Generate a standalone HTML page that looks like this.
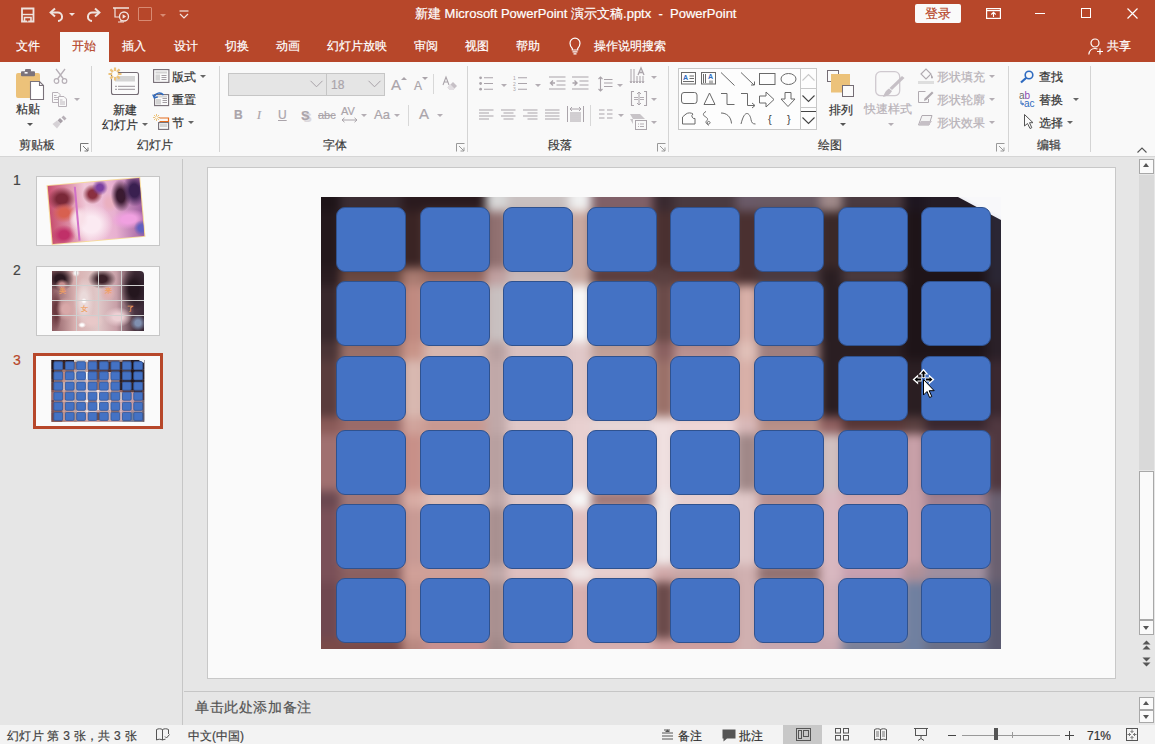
<!DOCTYPE html>
<html><head><meta charset="utf-8">
<style>
*{margin:0;padding:0;box-sizing:border-box}
html,body{-webkit-font-smoothing:antialiased;width:1155px;height:744px;overflow:hidden;background:#e6e6e6;font-family:"Liberation Sans",sans-serif;position:relative}
.a{position:absolute}
.t{position:absolute;white-space:nowrap;line-height:1;-webkit-text-stroke:0.2px currentColor}
svg{position:absolute;overflow:visible}
#title{left:0;top:0;width:1155px;height:62px;background:#b7472a}
#ribbon{left:0;top:62px;width:1155px;height:95px;background:#f9f9f9;border-bottom:1px solid #d6d6d6}
.tab{color:#fff;font-size:12px;top:40px}
.grp{color:#3c3c3c;font-size:12px;top:139px}
.sep{position:absolute;top:66px;width:1px;height:86px;background:#d4d4d4}
.rb{color:#333;font-size:12px}
.dis{color:#aaa4aa}
.dd{position:absolute;width:0;height:0;border-left:3px solid transparent;border-right:3px solid transparent;border-top:3px solid #6a6a6a}
.ddd{border-top-color:#b4aeb4}
.sq{position:absolute;width:70px;height:65px;background:#4472c4;border:1px solid #2f528f;border-radius:9px}
.sqt{border-width:6px;border-color:#34589a;border-radius:12px}
#status{left:0;top:725px;width:1155px;height:19px;background:#f3f3f3}
.st{font-size:12px;color:#444;top:730px}
</style></head><body>
<div id="title" class="a"></div>
<div id="ribbon" class="a"></div>
<!-- QAT -->
<svg style="left:20px;top:7px" width="16" height="16" viewBox="0 0 16 16"><path d="M2 1.5h11.5v13H2z" fill="none" stroke="#efe3de" stroke-width="1.8"/><path d="M2 7.5h11.5" stroke="#efe3de" stroke-width="1.4"/><path d="M4.5 14.5v-4h6.5v4" fill="none" stroke="#efe3de" stroke-width="1.6"/><path d="M7.7 12.5v2" stroke="#b7472a" stroke-width="1.2"/></svg>
<svg style="left:49px;top:7px" width="16" height="15" viewBox="0 0 16 15"><path d="M6 1.5L1.6 5.5 6 9.5" fill="none" stroke="#efe3de" stroke-width="2"/><path d="M2 5.5h6.5a4.3 4.3 0 0 1 0.5 8.6" fill="none" stroke="#efe3de" stroke-width="2"/></svg>
<div class="dd" style="left:69px;top:13px;border-top-color:#f2e4df;border-left-width:3px;border-right-width:3px;border-top-width:3px"></div>
<svg style="left:85px;top:7px" width="16" height="15" viewBox="0 0 16 15"><path d="M10 1.5l4.4 4L10 9.5" fill="none" stroke="#efe3de" stroke-width="2"/><path d="M14 5.5H7.5a4.3 4.3 0 0 0-0.5 8.6" fill="none" stroke="#efe3de" stroke-width="2"/></svg>
<svg style="left:113px;top:7px" width="17" height="16" viewBox="0 0 17 16"><path d="M0 1h16" stroke="#f2e4df" stroke-width="1.5"/><path d="M2 1v9h4" fill="none" stroke="#f2e4df" stroke-width="1.2"/><circle cx="11" cy="9.5" r="4.5" fill="none" stroke="#f2e4df" stroke-width="1.3"/><path d="M9.6 7.2v4.6l3.6-2.3z" fill="#f2e4df"/><path d="M5 15h6M8 13v2" stroke="#f2e4df" stroke-width="1.2"/></svg>
<div class="a" style="left:138px;top:7px;width:14px;height:14px;border:1px solid #d88a72;border-radius:1px"></div>
<div class="dd" style="left:160px;top:14px;border-top-color:#d88a72"></div>
<svg style="left:179px;top:10px" width="10" height="9" viewBox="0 0 10 9"><path d="M0.5 1h9" stroke="#f2e4df" stroke-width="1.2"/><path d="M1 4l4 4 4-4" fill="none" stroke="#f2e4df" stroke-width="1.2"/></svg>

<div class="t" style="left:415px;top:7px;font-size:13px;color:#fff">新建 Microsoft PowerPoint 演示文稿.pptx&nbsp; - &nbsp;PowerPoint</div>

<!-- login + window controls -->
<div class="a" style="left:915px;top:4px;width:46px;height:19px;background:#fafafa;border-radius:2px"></div>
<div class="t" style="left:925px;top:7px;font-size:13px;color:#b7472a">登录</div>
<svg style="left:986px;top:8px" width="15" height="11" viewBox="0 0 15 11"><rect x="0.6" y="0.6" width="13.8" height="9.8" fill="none" stroke="#fff" stroke-width="1.2"/><path d="M0.6 2.6h13.8" stroke="#fff" stroke-width="1.2"/><path d="M7.5 9V4.5M5.3 6.5l2.2-2.2 2.2 2.2" fill="none" stroke="#fff" stroke-width="1.1"/></svg>
<div class="a" style="left:1035px;top:13px;width:10px;height:1px;background:#fff"></div>
<div class="a" style="left:1081px;top:8px;width:10px;height:10px;border:1px solid #fff"></div>
<svg style="left:1127px;top:8px" width="11" height="11" viewBox="0 0 11 11"><path d="M0.5 0.5l10 10M10.5 0.5l-10 10" stroke="#fff" stroke-width="1.2"/></svg>

<!-- tabs -->
<div class="a" style="left:60px;top:32px;width:49px;height:31px;background:#f9f9f9"></div>
<div class="t tab" style="left:16px">文件</div>
<div class="t tab" style="left:72px;color:#b7472a">开始</div>
<div class="t tab" style="left:122px">插入</div>
<div class="t tab" style="left:174px">设计</div>
<div class="t tab" style="left:225px">切换</div>
<div class="t tab" style="left:276px">动画</div>
<div class="t tab" style="left:327px">幻灯片放映</div>
<div class="t tab" style="left:414px">审阅</div>
<div class="t tab" style="left:465px">视图</div>
<div class="t tab" style="left:516px">帮助</div>
<svg style="left:569px;top:37px" width="12" height="18" viewBox="0 0 12 18"><path d="M3.3 11.5C2.2 10.3 1 9 1 6.2A5 5 0 0 1 11 6.2c0 2.8-1.2 4.1-2.3 5.3V13H3.3z" fill="none" stroke="#fff" stroke-width="1.2"/><path d="M3.5 14.8h5M4.5 16.8h3" stroke="#fff" stroke-width="1.2"/></svg>
<div class="t tab" style="left:594px">操作说明搜索</div>
<svg style="left:1088px;top:38px" width="16" height="17" viewBox="0 0 16 17"><circle cx="7" cy="5" r="4" fill="none" stroke="#fff" stroke-width="1.2"/><path d="M0.8 16.5c0.5-3.8 2.8-6 6.2-6 1 0 1.8 0.2 2.5 0.5" fill="none" stroke="#fff" stroke-width="1.2"/><path d="M12 10.5v6M9 13.5h6" stroke="#fff" stroke-width="1.2"/></svg>
<div class="t tab" style="left:1107px">共享</div>

<!-- group labels -->
<div class="t grp" style="left:19px">剪贴板</div>
<div class="t grp" style="left:137px">幻灯片</div>
<div class="t grp" style="left:323px">字体</div>
<div class="t grp" style="left:548px">段落</div>
<div class="t grp" style="left:818px">绘图</div>
<div class="t grp" style="left:1037px">编辑</div>
<!-- launchers -->
<svg style="left:80px;top:143px" width="9" height="9" viewBox="0 0 9 9"><path d="M0.5 8.5V0.5h8M3 3l5 5M8 4.5V8H4.5" fill="none" stroke="#777" stroke-width="1"/></svg>
<svg style="left:456px;top:143px" width="9" height="9" viewBox="0 0 9 9"><path d="M0.5 8.5V0.5h8M3 3l5 5M8 4.5V8H4.5" fill="none" stroke="#999" stroke-width="1"/></svg>
<svg style="left:657px;top:143px" width="9" height="9" viewBox="0 0 9 9"><path d="M0.5 8.5V0.5h8M3 3l5 5M8 4.5V8H4.5" fill="none" stroke="#999" stroke-width="1"/></svg>
<svg style="left:996px;top:143px" width="9" height="9" viewBox="0 0 9 9"><path d="M0.5 8.5V0.5h8M3 3l5 5M8 4.5V8H4.5" fill="none" stroke="#999" stroke-width="1"/></svg>

<div class="sep" style="left:91px"></div>
<div class="sep" style="left:219px"></div>
<div class="sep" style="left:467px"></div>
<div class="sep" style="left:668px"></div>
<div class="sep" style="left:1008px"></div>
<div class="sep" style="left:1090px"></div>
<svg style="left:1137px;top:147px" width="10" height="6" viewBox="0 0 10 6"><path d="M0.5 5.5L5 1l4.5 4.5" fill="none" stroke="#555" stroke-width="1.1"/></svg>

<!-- clipboard -->
<svg style="left:15px;top:69px" width="30" height="32" viewBox="0 0 30 32"><rect x="1" y="4" width="24" height="25" rx="2" fill="#ecc27a"/><rect x="6" y="2.2" width="14" height="5" rx="1" fill="#7b737b"/><rect x="10" y="0" width="6" height="3" rx="1" fill="#7b737b"/><rect x="9.6" y="3" width="3" height="1.6" fill="#f9f9f9"/><path d="M15.5 12.5h9l4 4v14h-13z" fill="#fff" stroke="#7b737b" stroke-width="1.1"/><path d="M24.5 12.5v4h4" fill="none" stroke="#7b737b" stroke-width="1.1"/></svg>
<div class="t rb" style="left:16px;top:103px">粘贴</div>
<div class="dd" style="left:27px;top:123px;border-left-width:3px;border-right-width:3px;border-top-width:3px;border-top-color:#555"></div>
<svg style="left:53px;top:68px" width="15" height="16" viewBox="0 0 15 16"><path d="M3 1l7.5 10M12 1L4.5 11" stroke="#b7b0b7" stroke-width="1.3"/><circle cx="3.5" cy="13" r="2.3" fill="none" stroke="#b7b0b7" stroke-width="1.2"/><circle cx="11.5" cy="13" r="2.3" fill="none" stroke="#b7b0b7" stroke-width="1.2"/></svg>
<svg style="left:52px;top:92px" width="16" height="15" viewBox="0 0 16 15"><path d="M0.5 0.5h5.5l2 2V10.5H0.5z" fill="none" stroke="#b7b0b7" stroke-width="1"/><path d="M2 3.5h2.5M2 5.5h4M2 7.5h4" stroke="#b7b0b7" stroke-width="0.9"/><path d="M6.5 4.5h5.5l2.5 2.5v7.5H6.5z" fill="#f9f9f9" stroke="#b7b0b7" stroke-width="1"/><path d="M8 8h2.5M8 10h5M8 12h5" stroke="#b7b0b7" stroke-width="0.9"/></svg>
<div class="dd ddd" style="left:74px;top:98px"></div>
<svg style="left:52px;top:115px" width="16" height="14" viewBox="0 0 16 14"><path d="M11.5 0.5l3 3-2 2-3-3z" fill="#b7b0b7"/><path d="M8 3l3 3-2.5 2.5-3-3z" fill="#a8a0a8"/><path d="M5 5.5l3.5 3.5-3.5 4.5L0.5 9z" fill="#d6d2d6"/></svg>

<!-- slides -->
<svg style="left:108px;top:67px" width="32" height="29" viewBox="0 0 32 29"><rect x="3.5" y="5.5" width="27" height="22" rx="2" fill="#fbfbfb" stroke="#756d75" stroke-width="1.1"/><rect x="7" y="9" width="20" height="5.5" fill="#d4d4d4"/><path d="M7 19.3h2M10 19.3h17M7 22.3h2M10 22.3h17" stroke="#9a949a" stroke-width="1"/><g stroke="#ecc27a" stroke-width="2.2"><path d="M7 0.5v13M0.5 7h13M2.4 2.4l9.2 9.2M11.6 2.4l-9.2 9.2"/></g><circle cx="7" cy="7" r="2.9" fill="#fbfbfb"/></svg>
<div class="t rb" style="left:113px;top:104px">新建</div>
<div class="t rb" style="left:102px;top:119px">幻灯片</div>
<div class="dd" style="left:142px;top:123px;border-top-color:#666"></div>
<svg style="left:153px;top:69px" width="17" height="14" viewBox="0 0 17 14"><rect x="0.6" y="0.6" width="15.3" height="12.8" fill="none" stroke="#756d75" stroke-width="1.1"/><rect x="2.5" y="2.5" width="11.5" height="2" fill="#d4d4d4"/><rect x="2.5" y="5.5" width="4.5" height="6" fill="#d4d4d4"/><path d="M8.5 6.5h5M8.5 8.5h5M8.5 10.5h5" stroke="#9a949a" stroke-width="0.9"/></svg>
<div class="t rb" style="left:172px;top:71px">版式</div>
<div class="dd" style="left:200px;top:75px;border-top-color:#666"></div>
<svg style="left:152px;top:90px" width="18" height="17" viewBox="0 0 18 17"><rect x="2.6" y="4.6" width="14" height="11" fill="#fbfbfb" stroke="#756d75" stroke-width="1.1"/><rect x="4" y="9" width="5" height="5.5" fill="#d4d4d4"/><path d="M10.5 8.5h4.5M10.5 10.5h4.5M10.5 12.5h4.5" stroke="#9a949a" stroke-width="0.9"/><rect x="4" y="6" width="11" height="1.5" fill="#d4d4d4"/><path d="M2.5 6.5C3.5 3 8.5 1.5 11.5 5" fill="none" stroke="#2f6bc0" stroke-width="1.5"/><path d="M0.8 4.5l1.5 3.5 3.5-1.2" fill="none" stroke="#2f6bc0" stroke-width="1.4"/></svg>
<div class="t rb" style="left:172px;top:94px">重置</div>
<svg style="left:153px;top:114px" width="17" height="16" viewBox="0 0 17 16"><g stroke="#ecc27a" stroke-width="1"><path d="M3.5 0v7M0 3.5h7M1 1l5 5M6 1L1 6"/></g><circle cx="3.5" cy="3.5" r="1.3" fill="#fbfbfb"/><path d="M6.5 4h9v3.5H6.5" fill="none" stroke="#e46c1e" stroke-width="1.2"/><rect x="5.6" y="8.6" width="10" height="6.8" fill="none" stroke="#756d75" stroke-width="1.1"/><rect x="7" y="10" width="7.3" height="3" fill="#d4d4d4"/></svg>
<div class="t rb" style="left:172px;top:117px">节</div>
<div class="dd" style="left:188px;top:121px;border-top-color:#666"></div>

<!-- font -->
<div class="a" style="left:228px;top:73px;width:99px;height:23px;background:#e5e5e5;border:1px solid #c6c6c6"></div>
<div class="a" style="left:326px;top:73px;width:59px;height:23px;background:#e5e5e5;border:1px solid #c6c6c6"></div>
<svg style="left:310px;top:80px" width="13" height="8" viewBox="0 0 13 8"><path d="M0.5 0.8l6 6 6-6" fill="none" stroke="#a8a2a8" stroke-width="1"/></svg>
<svg style="left:368px;top:80px" width="13" height="8" viewBox="0 0 13 8"><path d="M0.5 0.8l6 6 6-6" fill="none" stroke="#a8a2a8" stroke-width="1"/></svg>
<div class="t" style="left:331px;top:79px;font-size:12px;color:#aaa4aa">18</div>
<div class="t dis" style="left:391px;top:77px;font-size:15px">A</div>
<div class="a" style="left:401px;top:77px;width:0;height:0;border-left:3px solid transparent;border-right:3px solid transparent;border-bottom:3px solid #aaa4aa"></div>
<div class="t dis" style="left:414px;top:80px;font-size:12px">A</div>
<div class="dd ddd" style="left:422px;top:77px;border-top-color:#aaa4aa"></div>
<div class="a" style="left:433px;top:74px;width:1px;height:20px;background:#d8d8d8"></div>
<svg style="left:442px;top:76px" width="16" height="15" viewBox="0 0 16 15"><path d="M1 9L4 1l3 8M2.2 6h3.6" fill="none" stroke="#aaa4aa" stroke-width="1.1"/><path d="M5.5 11.5L11 6l4 4-4 4H8z" fill="#c6c0c6"/><path d="M5.5 11.5L8.5 8.5l4 4-1.5 1.5H8z" fill="#e2dee2"/></svg>
<div class="t dis" style="left:234px;top:109px;font-size:12px;font-weight:bold">B</div>
<div class="t dis" style="left:257px;top:109px;font-size:12px;font-style:italic;font-family:'Liberation Serif',serif">I</div>
<div class="t dis" style="left:278px;top:109px;font-size:12px;text-decoration:underline">U</div>
<div class="t" style="left:303px;top:111px;font-size:13px;font-weight:bold;color:#dcd8dc">S</div>
<div class="t dis" style="left:301px;top:109px;font-size:13px;font-weight:bold">S</div>
<div class="t dis" style="left:318px;top:110px;font-size:11px;text-decoration:line-through">abc</div>
<div class="t dis" style="left:341px;top:106px;font-size:11px">AV</div>
<svg style="left:341px;top:117px" width="17" height="6" viewBox="0 0 17 6"><path d="M1 3h15M3.5 0.8L1 3l2.5 2.2M13.5 0.8L16 3l-2.5 2.2" fill="none" stroke="#aaa4aa" stroke-width="1"/></svg>
<div class="dd ddd" style="left:361px;top:114px"></div>
<div class="t dis" style="left:374px;top:108px;font-size:13px">Aa</div>
<div class="dd ddd" style="left:394px;top:114px"></div>
<div class="a" style="left:408px;top:105px;width:1px;height:21px;background:#d8d8d8"></div>
<div class="t dis" style="left:419px;top:106px;font-size:15px">A</div>
<div class="dd ddd" style="left:437px;top:114px"></div>

<!-- paragraph -->
<svg style="left:479px;top:76px" width="16" height="15" viewBox="0 0 16 15"><g fill="#aaa4aa"><circle cx="1.6" cy="1.8" r="1.4"/><circle cx="1.6" cy="7.5" r="1.4"/><circle cx="1.6" cy="13.2" r="1.4"/></g><path d="M5 1.8h9M5 7.5h9M5 13.2h9" stroke="#aaa4aa" stroke-width="1.1"/></svg>
<div class="dd ddd" style="left:501px;top:84px"></div>
<svg style="left:513px;top:76px" width="16" height="15" viewBox="0 0 16 15"><g font-size="5" fill="#aaa4aa" font-family="Liberation Sans"><text x="0" y="4">1</text><text x="0" y="9.5">2</text><text x="0" y="15">3</text></g><path d="M5 1.8h9M5 7.5h9M5 13.2h9" stroke="#aaa4aa" stroke-width="1.1"/></svg>
<div class="dd ddd" style="left:535px;top:84px"></div>
<svg style="left:549px;top:76px" width="17" height="14" viewBox="0 0 17 14"><path d="M0 1h16.5M7.5 5h9M7.5 9h9M0 13h16.5" stroke="#aaa4aa" stroke-width="1.1"/><path d="M6 7H1.5M4 4.5L1.5 7 4 9.5" fill="none" stroke="#aaa4aa" stroke-width="1.4"/></svg>
<svg style="left:572px;top:76px" width="17" height="14" viewBox="0 0 17 14"><path d="M0 1h16.5M7.5 5h9M7.5 9h9M0 13h16.5" stroke="#aaa4aa" stroke-width="1.1"/><path d="M0.5 7H5M2.5 4.5L5 7 2.5 9.5" fill="none" stroke="#aaa4aa" stroke-width="1.4"/></svg>
<svg style="left:598px;top:76px" width="15" height="16" viewBox="0 0 15 16"><path d="M2.5 1v14M0.5 3l2-2 2 2M0.5 13l2 2 2-2" fill="none" stroke="#aaa4aa" stroke-width="1.1"/><path d="M6 3.5h8.5M6 7h8.5M6 10.5h8.5" stroke="#aaa4aa" stroke-width="1.1"/></svg>
<div class="dd ddd" style="left:617px;top:84px"></div>
<svg style="left:630px;top:68px" width="17" height="16" viewBox="0 0 17 16"><path d="M1 1v14M4 1v14M7 8v7M10 8v7M13 8v7" stroke="#aaa4aa" stroke-width="1"/><path d="M0 13l1 2 1-2M3 13l1 2 1-2M6 13l1 2 1-2M9 13l1 2 1-2M12 13l1 2 1-2" fill="none" stroke="#aaa4aa" stroke-width="0.9"/><path d="M8 7L11 0l3 7M9.2 4.5h3.6" fill="none" stroke="#aaa4aa" stroke-width="1.3"/></svg>
<div class="dd ddd" style="left:651px;top:76px"></div>
<svg style="left:631px;top:91px" width="16" height="15" viewBox="0 0 16 15"><path d="M3 0.5H0.5v14H3M13 0.5h2.5v14H13" fill="none" stroke="#aaa4aa" stroke-width="1.1"/><path d="M8 1v13M6 3l2-2 2 2M6 12l2 2 2-2" fill="none" stroke="#aaa4aa" stroke-width="1"/><path d="M3 6.5h4M9 6.5h4M3 8.5h4M9 8.5h4" stroke="#aaa4aa" stroke-width="0.9"/></svg>
<div class="dd ddd" style="left:651px;top:98px"></div>
<svg style="left:479px;top:109px" width="15" height="11" viewBox="0 0 15 11"><path d="M0 1h14.5M0 4h10M0 7h14.5M0 10h10" stroke="#aaa4aa" stroke-width="1.1"/></svg>
<svg style="left:501px;top:109px" width="15" height="11" viewBox="0 0 15 11"><path d="M0 1h14.5M2.5 4h10M0 7h14.5M2.5 10h10" stroke="#aaa4aa" stroke-width="1.1"/></svg>
<svg style="left:523px;top:109px" width="15" height="11" viewBox="0 0 15 11"><path d="M0 1h14.5M4.5 4h10M0 7h14.5M4.5 10h10" stroke="#aaa4aa" stroke-width="1.1"/></svg>
<svg style="left:545px;top:109px" width="15" height="11" viewBox="0 0 15 11"><path d="M0 1h14.5M0 4h14.5M0 7h14.5M0 10h14.5" stroke="#aaa4aa" stroke-width="1.1"/></svg>
<svg style="left:567px;top:106px" width="17" height="16" viewBox="0 0 17 16"><path d="M0.5 0v16M16.5 0v16" stroke="#aaa4aa" stroke-width="1"/><path d="M3 3h11M5 1l-2 2 2 2M12 1l2 2-2 2" fill="none" stroke="#aaa4aa" stroke-width="1"/><path d="M3 7h11M3 9h11M3 11h11M3 13h11M3 15h11" stroke="#aaa4aa" stroke-width="1"/></svg>
<div class="a" style="left:590px;top:105px;width:1px;height:21px;background:#d8d8d8"></div>
<svg style="left:599px;top:109px" width="14" height="11" viewBox="0 0 14 11"><path d="M0 1h5.5M8 1h5.5M0 5h5.5M8 5h5.5M0 9h5.5M8 9h5.5" stroke="#aaa4aa" stroke-width="1.1"/></svg>
<div class="dd ddd" style="left:618px;top:114px"></div>
<svg style="left:630px;top:114px" width="17" height="16" viewBox="0 0 17 16"><path d="M0 0h10l5 5H3z" fill="#c8c4c8"/><path d="M0 5h3v5z" fill="#c8c4c8"/><rect x="5.5" y="6.5" width="11" height="9" fill="#f9f9f9" stroke="#aaa4aa" stroke-width="1"/><path d="M8 10h1M10 10h4M8 12.5h1M10 12.5h4" stroke="#aaa4aa" stroke-width="0.9"/></svg>
<div class="dd ddd" style="left:651px;top:121px"></div>

<!-- drawing: shapes gallery -->
<div class="a" style="left:678px;top:68px;width:139px;height:62px;background:#fdfdfd;border:1px solid #c8c8c8"></div>
<div class="a" style="left:800px;top:68px;width:1px;height:62px;background:#c8c8c8"></div>
<div class="a" style="left:800px;top:88px;width:17px;height:1px;background:#c8c8c8"></div>
<div class="a" style="left:800px;top:107px;width:17px;height:1px;background:#c8c8c8"></div>
<svg style="left:802px;top:74px" width="13" height="7" viewBox="0 0 13 7"><path d="M0.5 6.5l6-6 6 6" fill="none" stroke="#c8c8c8" stroke-width="1.1"/></svg>
<svg style="left:802px;top:95px" width="13" height="7" viewBox="0 0 13 7"><path d="M0.5 0.5l6 6 6-6" fill="none" stroke="#444" stroke-width="1.1"/></svg>
<div class="a" style="left:801px;top:111px;width:15px;height:1px;background:#444"></div>
<svg style="left:802px;top:117px" width="13" height="7" viewBox="0 0 13 7"><path d="M0.5 0.5l6 6 6-6" fill="none" stroke="#444" stroke-width="1.1"/></svg>
<svg style="left:678px;top:68px" width="125" height="62" viewBox="0 0 125 62">
<g fill="none" stroke="#6a6a6a" stroke-width="1">
<rect x="3.5" y="4.5" width="14" height="11.5"/>
<path d="M11.5 8h4.5M11.5 10.5h4.5M5 13.5h11"/>
<rect x="23.5" y="4.5" width="14" height="11.5"/>
<path d="M25.5 6v9M27.5 6v9M32 12.5v3M34 12.5v3"/>
<path d="M43 4.5l13.5 13M63 4.5l13 12.5M76.5 13.5v3.5h-3.5"/>
<rect x="81.5" y="5.5" width="15.5" height="11"/>
<ellipse cx="110.5" cy="11" rx="7.5" ry="5.5"/>
<rect x="3.5" y="24.5" width="15.5" height="11" rx="2.5"/>
<path d="M26 36.5L31.5 25l5.5 11.5z"/>
<path d="M43 25.5h6v11h7.5"/>
<path d="M63 25.5h6.5v12h7M74 35l3 2.5-3 2.5"/>
<path d="M81.5 28h6.5v-4l8 7.5-8 7.5v-4h-6.5z"/>
<path d="M107 24.5h6v6.5h4l-7 7.5-7-7.5h4z"/>
<path d="M4.5 56h12.5v-5.5a2.5 2.5 0 0 1 -2-4.5c-2-1.5-5-1.5-7 0l-3.5 3z"/>
<path d="M28 43.5c-3 1.5-3.5 3.5-1 5s3.5 2.5 1.5 4.5c-1.5 1.5 0.5 4 2.5 3s1-3-1-2.5c-1.5 0.5-0.5 3 0.5 4"/>
<path d="M43 45c5.5 0 10 3.5 10.5 10.5M63 56c2-8 4-10.5 6-10.5s3.5 3 4 6 1.5 4.5 4.5 4.5"/>
</g>
<text x="90" y="55" font-size="11" fill="#444" font-family="Liberation Sans">{</text>
<text x="109" y="55" font-size="11" fill="#444" font-family="Liberation Sans">}</text>
<text x="5" y="11.5" font-size="7" font-weight="bold" fill="#2f6bc0" font-family="Liberation Sans">A</text>
<text x="30" y="11" font-size="7" font-weight="bold" fill="#2f6bc0" font-family="Liberation Sans">A</text>
</svg>

<!-- arrange / quick styles / shape fill -->
<svg style="left:827px;top:70px" width="28" height="28" viewBox="0 0 28 28"><rect x="0.5" y="0.5" width="11" height="11" fill="#fbfbfb" stroke="#756d75" stroke-width="1"/><rect x="4" y="4" width="19" height="18.5" fill="#ecc27a"/><rect x="15.5" y="15.5" width="11" height="11" fill="#fbfbfb" stroke="#756d75" stroke-width="1"/></svg>
<div class="t rb" style="left:829px;top:104px">排列</div>
<div class="dd" style="left:840px;top:123px;border-top-color:#555"></div>
<svg style="left:875px;top:71px" width="30" height="30" viewBox="0 0 30 30"><rect x="0.7" y="0.7" width="24" height="24" rx="5" fill="none" stroke="#cfc9cf" stroke-width="1.3"/><path d="M27 5l2.5 2L17 19l-2.5-2z" fill="#c6c0c6"/><path d="M14 17.5l3 2.5c-1.5 3-4 5-9 6 1.5-4 3-7 6-8.5z" fill="#c6c0c6"/></svg>
<div class="t dis" style="left:864px;top:103px;font-size:12px;color:#b8b2b8">快速样式</div>
<div class="dd ddd" style="left:888px;top:123px"></div>
<svg style="left:918px;top:68px" width="17" height="16" viewBox="0 0 17 16"><path d="M3 6l5-5 5 5-5 5z" fill="none" stroke="#b0aab0" stroke-width="1.1"/><path d="M13 6c1 1.5 2 2.5 2 3.5a1 1 0 0 1-2 0" fill="#b0aab0"/><rect x="0" y="13" width="16" height="3" fill="#dedede"/></svg>
<div class="t dis" style="left:937px;top:71px;font-size:12px;color:#b8b2b8">形状填充</div>
<div class="dd ddd" style="left:989px;top:75px"></div>
<svg style="left:918px;top:91px" width="16" height="12" viewBox="0 0 16 12"><path d="M0.5 0.5h7M0.5 0.5v11h10V8" fill="none" stroke="#b0aab0" stroke-width="1"/><path d="M14 0.5l1.5 1.5-7 7L6 10l0.5-2.5z" fill="#b0aab0"/></svg>
<div class="t dis" style="left:937px;top:94px;font-size:12px;color:#b8b2b8">形状轮廓</div>
<div class="dd ddd" style="left:989px;top:98px"></div>
<svg style="left:918px;top:115px" width="15" height="12" viewBox="0 0 15 12"><path d="M4 0.5h10l-3 9.5H0.5z" fill="#f4f4f4" stroke="#b0aab0" stroke-width="1"/><path d="M0.5 10L3 6h11l-3 4z" fill="#c6c0c6"/></svg>
<div class="t dis" style="left:937px;top:117px;font-size:12px;color:#b8b2b8">形状效果</div>
<div class="dd ddd" style="left:989px;top:121px"></div>

<!-- editing -->
<svg style="left:1020px;top:70px" width="14" height="13" viewBox="0 0 14 13"><circle cx="9" cy="5" r="3.8" fill="none" stroke="#2f6bc0" stroke-width="1.6"/><path d="M6.3 7.7L1 12.5" stroke="#2f6bc0" stroke-width="2.2"/></svg>
<div class="t rb" style="left:1039px;top:71px">查找</div>
<svg style="left:1019px;top:91px" width="18" height="16" viewBox="0 0 18 16"><text x="0" y="7.5" font-size="10" fill="#6a6a6a" font-family="Liberation Sans">a</text><text x="5.5" y="7.5" font-size="10" fill="#8a4ab0" font-family="Liberation Sans">b</text><text x="5" y="15.5" font-size="10" fill="#2f6bc0" font-family="Liberation Sans">ac</text><path d="M2 9.5v3.5h2.5M3.2 12l1.5 1-1.5 1" fill="none" stroke="#2f6bc0" stroke-width="1"/></svg>
<div class="t rb" style="left:1039px;top:94px">替换</div>
<div class="dd" style="left:1073px;top:98px;border-top-color:#666"></div>
<svg style="left:1024px;top:114px" width="10" height="15" viewBox="0 0 10 15"><path d="M0.5 0.5v11.5l3-2.5 2.5 5 1.8-0.8-2.3-5H9z" fill="#fbfbfb" stroke="#555" stroke-width="1" stroke-linejoin="round"/></svg>
<div class="t rb" style="left:1039px;top:117px">选择</div>
<div class="dd" style="left:1067px;top:121px;border-top-color:#666"></div>


<!-- left pane divider -->
<div class="a" style="left:182px;top:159px;width:1px;height:566px;background:#c6c6c6"></div>
<div class="t" style="left:13px;top:173px;font-size:14px;color:#444">1</div>
<div class="a" style="left:36px;top:176px;width:124px;height:70px;background:#fafafa;border:1px solid #c6c6c6"></div>
<div class="a" style="left:49px;top:181px;width:94px;height:60px;transform:rotate(-5deg);background:#f6da98;padding:1px;overflow:hidden">
 <div class="a" style="left:1px;top:1px;width:92px;height:58px;background:radial-gradient(ellipse 10px 12px at 28px 35px,#f8e0e8,#f8e0e8 40%,rgba(248,224,232,0)),radial-gradient(ellipse 8px 8px at 90px 50px,#6060c0,#6060c0 40%,rgba(96,96,192,0)),radial-gradient(ellipse 18px 10px at 78px 40px,#f0a0e0,#f0a0e0 40%,rgba(240,160,224,0)),radial-gradient(ellipse 12px 16px at 86px 12px,#3a2050,#3a2050 40%,rgba(58,32,80,0)),radial-gradient(ellipse 10px 16px at 72px 16px,#3a1a30,#3a1a30 40%,rgba(58,26,48,0)),radial-gradient(ellipse 8px 10px at 60px 22px,#eab0c0,#eab0c0 40%,rgba(234,176,192,0)),radial-gradient(ellipse 8px 8px at 52px 6px,#7a40a0,#7a40a0 40%,rgba(122,64,160,0)),radial-gradient(ellipse 10px 10px at 44px 12px,#8a3040,#8a3040 40%,rgba(138,48,64,0)),radial-gradient(ellipse 22px 20px at 40px 42px,#fbeaf2,#fbeaf2 40%,rgba(251,234,242,0)),radial-gradient(ellipse 12px 10px at 12px 50px,#c03068,#c03068 40%,rgba(192,48,104,0)),radial-gradient(ellipse 12px 10px at 14px 28px,#d86050,#d86050 40%,rgba(216,96,80,0)),radial-gradient(ellipse 14px 12px at 13px 14px,#7a2838,#7a2838 40%,rgba(122,40,56,0)),linear-gradient(90deg,#c85070,#f0c8d8 40%,#e8b0d0 70%,#a060a0)"></div>
 <div class="a" style="left:27px;top:4px;width:1.5px;height:54px;background:#d070c8"></div>
</div>
<div class="t" style="left:13px;top:263px;font-size:14px;color:#444">2</div>
<div class="a" style="left:36px;top:266px;width:124px;height:70px;background:#fafafa;border:1px solid #c6c6c6"></div>
<div class="a" style="left:52px;top:271px;width:92px;height:60px;overflow:hidden;border-top-right-radius:4px;background:radial-gradient(ellipse 4px 3px at 30px 54px,#ffffff,#ffffff 35%,rgba(255,255,255,0)),radial-gradient(ellipse 3px 3px at 32px 30px,#ffffff,#ffffff 35%,rgba(255,255,255,0)),radial-gradient(ellipse 4px 4px at 24px 2px,#f4f4f4,#f4f4f4 35%,rgba(244,244,244,0)),radial-gradient(ellipse 12px 8px at 40px 50px,#e8c8c8,#e8c8c8 35%,rgba(232,200,200,0)),radial-gradient(ellipse 8px 8px at 86px 52px,#8090b0,#8090b0 35%,rgba(128,144,176,0)),radial-gradient(ellipse 14px 10px at 66px 46px,#ecd0d4,#ecd0d4 35%,rgba(236,208,212,0)),radial-gradient(ellipse 14px 22px at 82px 18px,#24161e,#24161e 35%,rgba(36,22,30,0)),radial-gradient(ellipse 8px 9px at 56px 22px,#e0b0b0,#e0b0b0 35%,rgba(224,176,176,0)),radial-gradient(ellipse 14px 10px at 50px 8px,#3a2028,#3a2028 35%,rgba(58,32,40,0)),radial-gradient(ellipse 10px 24px at 32px 30px,#eadada,#eadada 35%,rgba(234,218,218,0)),radial-gradient(ellipse 10px 12px at 14px 38px,#d8a8a8,#d8a8a8 35%,rgba(216,168,168,0)),radial-gradient(ellipse 6px 20px at 4px 40px,#6a3a40,#6a3a40 35%,rgba(106,58,64,0)),radial-gradient(ellipse 7px 6px at 10px 14px,#c89090,#c89090 35%,rgba(200,144,144,0)),radial-gradient(ellipse 14px 12px at 8px 8px,#2a1820,#2a1820 35%,rgba(42,24,32,0)),linear-gradient(90deg,#8a5a60 0%,#d8b0b0 25%,#e0c8c8 50%,#c8a0a8 70%,#4a3440 90%,#3a2a38 100%)">
 <div class="a" style="left:24px;top:0;width:1px;height:60px;background:#cfcfcf"></div>
 <div class="a" style="left:46px;top:0;width:1px;height:60px;background:#cfcfcf"></div>
 <div class="a" style="left:69px;top:0;width:1px;height:60px;background:#cfcfcf"></div>
 <div class="a" style="left:0;top:14px;width:92px;height:1px;background:#cfcfcf"></div>
 <div class="a" style="left:0;top:29px;width:92px;height:1px;background:#cfcfcf"></div>
 <div class="a" style="left:0;top:44px;width:92px;height:1px;background:#cfcfcf"></div>
 <div class="t" style="left:7px;top:16px;font-size:7px;color:#f0a060">美</div>
 <div class="t" style="left:29px;top:34px;font-size:7px;color:#f0a060">女</div>
 <div class="t" style="left:53px;top:16px;font-size:7px;color:#f0a060">来</div>
 <div class="t" style="left:75px;top:34px;font-size:7px;color:#f0a060">了</div>
</div>
<div class="t" style="left:13px;top:353px;font-size:14px;color:#b7472a">3</div>
<div class="a" style="left:33px;top:353px;width:130px;height:76px;border:3px solid #b7472a;background:#fafafa"></div>
<div class="a" style="left:36px;top:356px;width:908px;height:511px;transform:scale(0.13656);transform-origin:0 0;overflow:hidden">
<div class="a" style="left:113px;top:29px;width:680px;height:452px;overflow:hidden;background:#8a6a6a">
<div class="a" style="left:-20px;top:-20px;width:720px;height:492px;filter:blur(5px)">
<div class="a" style="left:0px;top:0px;width:39px;height:34px;background:#1e1418"></div>
<div class="a" style="left:39px;top:0px;width:62px;height:34px;background:#3a2c32"></div>
<div class="a" style="left:101px;top:0px;width:22px;height:34px;background:#2a1a1e"></div>
<div class="a" style="left:123px;top:0px;width:62px;height:34px;background:#2a1a1e"></div>
<div class="a" style="left:185px;top:0px;width:21px;height:34px;background:#d8d8d8"></div>
<div class="a" style="left:206px;top:0px;width:62px;height:34px;background:#c8c0c0"></div>
<div class="a" style="left:268px;top:0px;width:22px;height:34px;background:#f0f0f0"></div>
<div class="a" style="left:290px;top:0px;width:62px;height:34px;background:#806068"></div>
<div class="a" style="left:352px;top:0px;width:21px;height:34px;background:#3a2a30"></div>
<div class="a" style="left:373px;top:0px;width:62px;height:34px;background:#4a3a40"></div>
<div class="a" style="left:435px;top:0px;width:22px;height:34px;background:#6a5a68"></div>
<div class="a" style="left:457px;top:0px;width:62px;height:34px;background:#6a5a64"></div>
<div class="a" style="left:519px;top:0px;width:22px;height:34px;background:#a08a8a"></div>
<div class="a" style="left:541px;top:0px;width:62px;height:34px;background:#4a3a40"></div>
<div class="a" style="left:603px;top:0px;width:21px;height:34px;background:#1e1620"></div>
<div class="a" style="left:624px;top:0px;width:62px;height:34px;background:#241c26"></div>
<div class="a" style="left:686px;top:0px;width:34px;height:34px;background:#2a2230"></div>
<div class="a" style="left:0px;top:34px;width:39px;height:57px;background:#24181c"></div>
<div class="a" style="left:39px;top:34px;width:62px;height:57px;background:#402c2c"></div>
<div class="a" style="left:101px;top:34px;width:22px;height:57px;background:#3a2424"></div>
<div class="a" style="left:123px;top:34px;width:62px;height:57px;background:#624644"></div>
<div class="a" style="left:185px;top:34px;width:21px;height:57px;background:#907070"></div>
<div class="a" style="left:206px;top:34px;width:62px;height:57px;background:#baa4a2"></div>
<div class="a" style="left:268px;top:34px;width:22px;height:57px;background:#c8a8a0"></div>
<div class="a" style="left:290px;top:34px;width:62px;height:57px;background:#7b5d5d"></div>
<div class="a" style="left:352px;top:34px;width:21px;height:57px;background:#4a3030"></div>
<div class="a" style="left:373px;top:34px;width:62px;height:57px;background:#4e3536"></div>
<div class="a" style="left:435px;top:34px;width:22px;height:57px;background:#4a3030"></div>
<div class="a" style="left:457px;top:34px;width:62px;height:57px;background:#4e3b3f"></div>
<div class="a" style="left:519px;top:34px;width:22px;height:57px;background:#3a2828"></div>
<div class="a" style="left:541px;top:34px;width:62px;height:57px;background:#3b2c30"></div>
<div class="a" style="left:603px;top:34px;width:21px;height:57px;background:#1e1418"></div>
<div class="a" style="left:624px;top:34px;width:62px;height:57px;background:#221a22"></div>
<div class="a" style="left:686px;top:34px;width:34px;height:57px;background:#2a2634"></div>
<div class="a" style="left:0px;top:91px;width:39px;height:17px;background:#2a1c20"></div>
<div class="a" style="left:39px;top:91px;width:62px;height:17px;background:#6a4840"></div>
<div class="a" style="left:101px;top:91px;width:22px;height:17px;background:#a87a70"></div>
<div class="a" style="left:123px;top:91px;width:62px;height:17px;background:#946860"></div>
<div class="a" style="left:185px;top:91px;width:21px;height:17px;background:#c0a0a0"></div>
<div class="a" style="left:206px;top:91px;width:62px;height:17px;background:#c8b8b8"></div>
<div class="a" style="left:268px;top:91px;width:22px;height:17px;background:#c8a8a0"></div>
<div class="a" style="left:290px;top:91px;width:62px;height:17px;background:#5a3c3c"></div>
<div class="a" style="left:352px;top:91px;width:21px;height:17px;background:#5a4040"></div>
<div class="a" style="left:373px;top:91px;width:62px;height:17px;background:#5a3a3a"></div>
<div class="a" style="left:435px;top:91px;width:22px;height:17px;background:#4a3030"></div>
<div class="a" style="left:457px;top:91px;width:62px;height:17px;background:#4a3a40"></div>
<div class="a" style="left:519px;top:91px;width:22px;height:17px;background:#2a1e22"></div>
<div class="a" style="left:541px;top:91px;width:62px;height:17px;background:#4a3a3e"></div>
<div class="a" style="left:603px;top:91px;width:21px;height:17px;background:#1e1418"></div>
<div class="a" style="left:624px;top:91px;width:62px;height:17px;background:#1e1418"></div>
<div class="a" style="left:686px;top:91px;width:34px;height:17px;background:#2a2634"></div>
<div class="a" style="left:0px;top:108px;width:39px;height:57px;background:#38282c"></div>
<div class="a" style="left:39px;top:108px;width:62px;height:57px;background:#7f5a55"></div>
<div class="a" style="left:101px;top:108px;width:22px;height:57px;background:#c08a80"></div>
<div class="a" style="left:123px;top:108px;width:62px;height:57px;background:#bd9a94"></div>
<div class="a" style="left:185px;top:108px;width:21px;height:57px;background:#c8c0c0"></div>
<div class="a" style="left:206px;top:108px;width:62px;height:57px;background:#d8cccc"></div>
<div class="a" style="left:268px;top:108px;width:22px;height:57px;background:#f8f8f8"></div>
<div class="a" style="left:290px;top:108px;width:62px;height:57px;background:#9f8885"></div>
<div class="a" style="left:352px;top:108px;width:21px;height:57px;background:#6a4a48"></div>
<div class="a" style="left:373px;top:108px;width:62px;height:57px;background:#95716e"></div>
<div class="a" style="left:435px;top:108px;width:22px;height:57px;background:#d8b0a8"></div>
<div class="a" style="left:457px;top:108px;width:62px;height:57px;background:#7b6262"></div>
<div class="a" style="left:519px;top:108px;width:22px;height:57px;background:#2a1e22"></div>
<div class="a" style="left:541px;top:108px;width:62px;height:57px;background:#2f2226"></div>
<div class="a" style="left:603px;top:108px;width:21px;height:57px;background:#1e1418"></div>
<div class="a" style="left:624px;top:108px;width:62px;height:57px;background:#21171c"></div>
<div class="a" style="left:686px;top:108px;width:34px;height:57px;background:#2a2028"></div>
<div class="a" style="left:0px;top:165px;width:39px;height:18px;background:#4a3436"></div>
<div class="a" style="left:39px;top:165px;width:62px;height:18px;background:#9a7068"></div>
<div class="a" style="left:101px;top:165px;width:22px;height:18px;background:#c89488"></div>
<div class="a" style="left:123px;top:165px;width:62px;height:18px;background:#d8b8b0"></div>
<div class="a" style="left:185px;top:165px;width:21px;height:18px;background:#b8a0a0"></div>
<div class="a" style="left:206px;top:165px;width:62px;height:18px;background:#d8c0c0"></div>
<div class="a" style="left:268px;top:165px;width:22px;height:18px;background:#e0c8c8"></div>
<div class="a" style="left:290px;top:165px;width:62px;height:18px;background:#c0a098"></div>
<div class="a" style="left:352px;top:165px;width:21px;height:18px;background:#8a6060"></div>
<div class="a" style="left:373px;top:165px;width:62px;height:18px;background:#b89090"></div>
<div class="a" style="left:435px;top:165px;width:22px;height:18px;background:#e0c0b8"></div>
<div class="a" style="left:457px;top:165px;width:62px;height:18px;background:#a08080"></div>
<div class="a" style="left:519px;top:165px;width:22px;height:18px;background:#2a1e22"></div>
<div class="a" style="left:541px;top:165px;width:62px;height:18px;background:#2a1e22"></div>
<div class="a" style="left:603px;top:165px;width:21px;height:18px;background:#1e1418"></div>
<div class="a" style="left:624px;top:165px;width:62px;height:18px;background:#1e1418"></div>
<div class="a" style="left:686px;top:165px;width:34px;height:18px;background:#2a2028"></div>
<div class="a" style="left:0px;top:183px;width:39px;height:57px;background:#5a3c3c"></div>
<div class="a" style="left:39px;top:183px;width:62px;height:57px;background:#9a746f"></div>
<div class="a" style="left:101px;top:183px;width:22px;height:57px;background:#d8b8b0"></div>
<div class="a" style="left:123px;top:183px;width:62px;height:57px;background:#ceaca6"></div>
<div class="a" style="left:185px;top:183px;width:21px;height:57px;background:#c0a8a8"></div>
<div class="a" style="left:206px;top:183px;width:62px;height:57px;background:#d6bebe"></div>
<div class="a" style="left:268px;top:183px;width:22px;height:57px;background:#e0c8c8"></div>
<div class="a" style="left:290px;top:183px;width:62px;height:57px;background:#c8aca8"></div>
<div class="a" style="left:352px;top:183px;width:21px;height:57px;background:#9a7068"></div>
<div class="a" style="left:373px;top:183px;width:62px;height:57px;background:#c6a29e"></div>
<div class="a" style="left:435px;top:183px;width:22px;height:57px;background:#d8b0a8"></div>
<div class="a" style="left:457px;top:183px;width:62px;height:57px;background:#967874"></div>
<div class="a" style="left:519px;top:183px;width:22px;height:57px;background:#2a1e22"></div>
<div class="a" style="left:541px;top:183px;width:62px;height:57px;background:#362428"></div>
<div class="a" style="left:603px;top:183px;width:21px;height:57px;background:#2a1e22"></div>
<div class="a" style="left:624px;top:183px;width:62px;height:57px;background:#2f2026"></div>
<div class="a" style="left:686px;top:183px;width:34px;height:57px;background:#3a2830"></div>
<div class="a" style="left:0px;top:240px;width:39px;height:17px;background:#8a5a58"></div>
<div class="a" style="left:39px;top:240px;width:62px;height:17px;background:#9a6a68"></div>
<div class="a" style="left:101px;top:240px;width:22px;height:17px;background:#d0a49c"></div>
<div class="a" style="left:123px;top:240px;width:62px;height:17px;background:#c89890"></div>
<div class="a" style="left:185px;top:240px;width:21px;height:17px;background:#c0a8a8"></div>
<div class="a" style="left:206px;top:240px;width:62px;height:17px;background:#e0c8c8"></div>
<div class="a" style="left:268px;top:240px;width:22px;height:17px;background:#e8d0d0"></div>
<div class="a" style="left:290px;top:240px;width:62px;height:17px;background:#e8d8d8"></div>
<div class="a" style="left:352px;top:240px;width:21px;height:17px;background:#f0e0e0"></div>
<div class="a" style="left:373px;top:240px;width:62px;height:17px;background:#f0d8d8"></div>
<div class="a" style="left:435px;top:240px;width:22px;height:17px;background:#d8b8b8"></div>
<div class="a" style="left:457px;top:240px;width:62px;height:17px;background:#b89088"></div>
<div class="a" style="left:519px;top:240px;width:22px;height:17px;background:#906060"></div>
<div class="a" style="left:541px;top:240px;width:62px;height:17px;background:#5a3838"></div>
<div class="a" style="left:603px;top:240px;width:21px;height:17px;background:#5a4040"></div>
<div class="a" style="left:624px;top:240px;width:62px;height:17px;background:#3a2830"></div>
<div class="a" style="left:686px;top:240px;width:34px;height:17px;background:#503840"></div>
<div class="a" style="left:0px;top:257px;width:39px;height:57px;background:#a07070"></div>
<div class="a" style="left:39px;top:257px;width:62px;height:57px;background:#a87876"></div>
<div class="a" style="left:101px;top:257px;width:22px;height:57px;background:#c89088"></div>
<div class="a" style="left:123px;top:257px;width:62px;height:57px;background:#caa29c"></div>
<div class="a" style="left:185px;top:257px;width:21px;height:57px;background:#b8a0a0"></div>
<div class="a" style="left:206px;top:257px;width:62px;height:57px;background:#d8c0c0"></div>
<div class="a" style="left:268px;top:257px;width:22px;height:57px;background:#e8d0d0"></div>
<div class="a" style="left:290px;top:257px;width:62px;height:57px;background:#d8c0c0"></div>
<div class="a" style="left:352px;top:257px;width:21px;height:57px;background:#f0e0e0"></div>
<div class="a" style="left:373px;top:257px;width:62px;height:57px;background:#dac4c4"></div>
<div class="a" style="left:435px;top:257px;width:22px;height:57px;background:#a08888"></div>
<div class="a" style="left:457px;top:257px;width:62px;height:57px;background:#b89a98"></div>
<div class="a" style="left:519px;top:257px;width:22px;height:57px;background:#d0c0c0"></div>
<div class="a" style="left:541px;top:257px;width:62px;height:57px;background:#b09094"></div>
<div class="a" style="left:603px;top:257px;width:21px;height:57px;background:#c8a0a8"></div>
<div class="a" style="left:624px;top:257px;width:62px;height:57px;background:#7c606a"></div>
<div class="a" style="left:686px;top:257px;width:34px;height:57px;background:#503840"></div>
<div class="a" style="left:0px;top:314px;width:39px;height:17px;background:#6a4850"></div>
<div class="a" style="left:39px;top:314px;width:62px;height:17px;background:#a07878"></div>
<div class="a" style="left:101px;top:314px;width:22px;height:17px;background:#d8aca4"></div>
<div class="a" style="left:123px;top:314px;width:62px;height:17px;background:#e0c0b8"></div>
<div class="a" style="left:185px;top:314px;width:21px;height:17px;background:#c0a8a8"></div>
<div class="a" style="left:206px;top:314px;width:62px;height:17px;background:#e0c8c8"></div>
<div class="a" style="left:268px;top:314px;width:22px;height:17px;background:#f8f8f8"></div>
<div class="a" style="left:290px;top:314px;width:62px;height:17px;background:#a07878"></div>
<div class="a" style="left:352px;top:314px;width:21px;height:17px;background:#f0e8e8"></div>
<div class="a" style="left:373px;top:314px;width:62px;height:17px;background:#e8d0d0"></div>
<div class="a" style="left:435px;top:314px;width:22px;height:17px;background:#e0c8c8"></div>
<div class="a" style="left:457px;top:314px;width:62px;height:17px;background:#b89090"></div>
<div class="a" style="left:519px;top:314px;width:22px;height:17px;background:#d8b8c0"></div>
<div class="a" style="left:541px;top:314px;width:62px;height:17px;background:#d0a8b0"></div>
<div class="a" style="left:603px;top:314px;width:21px;height:17px;background:#c8a0a8"></div>
<div class="a" style="left:624px;top:314px;width:62px;height:17px;background:#a08090"></div>
<div class="a" style="left:686px;top:314px;width:34px;height:17px;background:#6a6070"></div>
<div class="a" style="left:0px;top:331px;width:39px;height:57px;background:#7a5058"></div>
<div class="a" style="left:39px;top:331px;width:62px;height:57px;background:#9b7071"></div>
<div class="a" style="left:101px;top:331px;width:22px;height:57px;background:#c89a94"></div>
<div class="a" style="left:123px;top:331px;width:62px;height:57px;background:#c8a29d"></div>
<div class="a" style="left:185px;top:331px;width:21px;height:57px;background:#a89090"></div>
<div class="a" style="left:206px;top:331px;width:62px;height:57px;background:#d2b6b6"></div>
<div class="a" style="left:268px;top:331px;width:22px;height:57px;background:#e0c0c0"></div>
<div class="a" style="left:290px;top:331px;width:62px;height:57px;background:#d6bcbc"></div>
<div class="a" style="left:352px;top:331px;width:21px;height:57px;background:#f0e8e8"></div>
<div class="a" style="left:373px;top:331px;width:62px;height:57px;background:#e0caca"></div>
<div class="a" style="left:435px;top:331px;width:22px;height:57px;background:#e0c8c8"></div>
<div class="a" style="left:457px;top:331px;width:62px;height:57px;background:#c0a0a2"></div>
<div class="a" style="left:519px;top:331px;width:22px;height:57px;background:#d8b8c0"></div>
<div class="a" style="left:541px;top:331px;width:62px;height:57px;background:#cea8b2"></div>
<div class="a" style="left:603px;top:331px;width:21px;height:57px;background:#c8a0a8"></div>
<div class="a" style="left:624px;top:331px;width:62px;height:57px;background:#9c8492"></div>
<div class="a" style="left:686px;top:331px;width:34px;height:57px;background:#6a6070"></div>
<div class="a" style="left:0px;top:388px;width:39px;height:17px;background:#7a5058"></div>
<div class="a" style="left:39px;top:388px;width:62px;height:17px;background:#8a6060"></div>
<div class="a" style="left:101px;top:388px;width:22px;height:17px;background:#d0a098"></div>
<div class="a" style="left:123px;top:388px;width:62px;height:17px;background:#d0a098"></div>
<div class="a" style="left:185px;top:388px;width:21px;height:17px;background:#c0a8a8"></div>
<div class="a" style="left:206px;top:388px;width:62px;height:17px;background:#e0c0c0"></div>
<div class="a" style="left:268px;top:388px;width:22px;height:17px;background:#f0e8e8"></div>
<div class="a" style="left:290px;top:388px;width:62px;height:17px;background:#e8d0d0"></div>
<div class="a" style="left:352px;top:388px;width:21px;height:17px;background:#d0a8a8"></div>
<div class="a" style="left:373px;top:388px;width:62px;height:17px;background:#c8a8a8"></div>
<div class="a" style="left:435px;top:388px;width:22px;height:17px;background:#d0b0b0"></div>
<div class="a" style="left:457px;top:388px;width:62px;height:17px;background:#907070"></div>
<div class="a" style="left:519px;top:388px;width:22px;height:17px;background:#d8b8c0"></div>
<div class="a" style="left:541px;top:388px;width:62px;height:17px;background:#c8a0b0"></div>
<div class="a" style="left:603px;top:388px;width:21px;height:17px;background:#b09098"></div>
<div class="a" style="left:624px;top:388px;width:62px;height:17px;background:#a090a0"></div>
<div class="a" style="left:686px;top:388px;width:34px;height:17px;background:#6a6070"></div>
<div class="a" style="left:0px;top:405px;width:39px;height:57px;background:#704850"></div>
<div class="a" style="left:39px;top:405px;width:62px;height:57px;background:#8f6262"></div>
<div class="a" style="left:101px;top:405px;width:22px;height:57px;background:#c89890"></div>
<div class="a" style="left:123px;top:405px;width:62px;height:57px;background:#c29692"></div>
<div class="a" style="left:185px;top:405px;width:21px;height:57px;background:#a89090"></div>
<div class="a" style="left:206px;top:405px;width:62px;height:57px;background:#caa8a8"></div>
<div class="a" style="left:268px;top:405px;width:22px;height:57px;background:#d8b0b0"></div>
<div class="a" style="left:290px;top:405px;width:62px;height:57px;background:#c09e9e"></div>
<div class="a" style="left:352px;top:405px;width:21px;height:57px;background:#6a4a4a"></div>
<div class="a" style="left:373px;top:405px;width:62px;height:57px;background:#b49090"></div>
<div class="a" style="left:435px;top:405px;width:22px;height:57px;background:#d0b0b0"></div>
<div class="a" style="left:457px;top:405px;width:62px;height:57px;background:#be9ea2"></div>
<div class="a" style="left:519px;top:405px;width:22px;height:57px;background:#d0b0b8"></div>
<div class="a" style="left:541px;top:405px;width:62px;height:57px;background:#a094a8"></div>
<div class="a" style="left:603px;top:405px;width:21px;height:57px;background:#7080a0"></div>
<div class="a" style="left:624px;top:405px;width:62px;height:57px;background:#75768e"></div>
<div class="a" style="left:686px;top:405px;width:34px;height:57px;background:#5a5a70"></div>
<div class="a" style="left:0px;top:462px;width:39px;height:30px;background:#7a4a48"></div>
<div class="a" style="left:39px;top:462px;width:62px;height:30px;background:#7a4a48"></div>
<div class="a" style="left:101px;top:462px;width:22px;height:30px;background:#b88880"></div>
<div class="a" style="left:123px;top:462px;width:62px;height:30px;background:#c89090"></div>
<div class="a" style="left:185px;top:462px;width:21px;height:30px;background:#a08888"></div>
<div class="a" style="left:206px;top:462px;width:62px;height:30px;background:#c8a0a0"></div>
<div class="a" style="left:268px;top:462px;width:22px;height:30px;background:#d8b0b0"></div>
<div class="a" style="left:290px;top:462px;width:62px;height:30px;background:#d8b0b0"></div>
<div class="a" style="left:352px;top:462px;width:21px;height:30px;background:#d0a0a0"></div>
<div class="a" style="left:373px;top:462px;width:62px;height:30px;background:#d0a0a0"></div>
<div class="a" style="left:435px;top:462px;width:22px;height:30px;background:#d0b0b0"></div>
<div class="a" style="left:457px;top:462px;width:62px;height:30px;background:#c8a8b0"></div>
<div class="a" style="left:519px;top:462px;width:22px;height:30px;background:#c8a8b0"></div>
<div class="a" style="left:541px;top:462px;width:62px;height:30px;background:#7a8098"></div>
<div class="a" style="left:603px;top:462px;width:21px;height:30px;background:#7080a0"></div>
<div class="a" style="left:624px;top:462px;width:62px;height:30px;background:#6a7088"></div>
<div class="a" style="left:686px;top:462px;width:34px;height:30px;background:#5a5a70"></div>
</div>
<div class="a" style="left:637px;top:0;width:43px;height:23px;clip-path:polygon(0 0,100% 0,100% 100%);background:linear-gradient(208deg,#f8f8fa 40%,#dde0ee 70%,#a0a8c8 100%)"></div>

</div>
<div class="sq sqt" style="left:128px;top:39px"></div>
<div class="sq sqt" style="left:212px;top:39px"></div>
<div class="sq sqt" style="left:295px;top:39px"></div>
<div class="sq sqt" style="left:379px;top:39px"></div>
<div class="sq sqt" style="left:462px;top:39px"></div>
<div class="sq sqt" style="left:546px;top:39px"></div>
<div class="sq sqt" style="left:630px;top:39px"></div>
<div class="sq sqt" style="left:713px;top:39px"></div>
<div class="sq sqt" style="left:128px;top:113px"></div>
<div class="sq sqt" style="left:212px;top:113px"></div>
<div class="sq sqt" style="left:295px;top:113px"></div>
<div class="sq sqt" style="left:379px;top:113px"></div>
<div class="sq sqt" style="left:462px;top:113px"></div>
<div class="sq sqt" style="left:546px;top:113px"></div>
<div class="sq sqt" style="left:630px;top:113px"></div>
<div class="sq sqt" style="left:713px;top:113px"></div>
<div class="sq sqt" style="left:128px;top:188px"></div>
<div class="sq sqt" style="left:212px;top:188px"></div>
<div class="sq sqt" style="left:295px;top:188px"></div>
<div class="sq sqt" style="left:379px;top:188px"></div>
<div class="sq sqt" style="left:462px;top:188px"></div>
<div class="sq sqt" style="left:546px;top:188px"></div>
<div class="sq sqt" style="left:630px;top:188px"></div>
<div class="sq sqt" style="left:713px;top:188px"></div>
<div class="sq sqt" style="left:128px;top:262px"></div>
<div class="sq sqt" style="left:212px;top:262px"></div>
<div class="sq sqt" style="left:295px;top:262px"></div>
<div class="sq sqt" style="left:379px;top:262px"></div>
<div class="sq sqt" style="left:462px;top:262px"></div>
<div class="sq sqt" style="left:546px;top:262px"></div>
<div class="sq sqt" style="left:630px;top:262px"></div>
<div class="sq sqt" style="left:713px;top:262px"></div>
<div class="sq sqt" style="left:128px;top:336px"></div>
<div class="sq sqt" style="left:212px;top:336px"></div>
<div class="sq sqt" style="left:295px;top:336px"></div>
<div class="sq sqt" style="left:379px;top:336px"></div>
<div class="sq sqt" style="left:462px;top:336px"></div>
<div class="sq sqt" style="left:546px;top:336px"></div>
<div class="sq sqt" style="left:630px;top:336px"></div>
<div class="sq sqt" style="left:713px;top:336px"></div>
<div class="sq sqt" style="left:128px;top:410px"></div>
<div class="sq sqt" style="left:212px;top:410px"></div>
<div class="sq sqt" style="left:295px;top:410px"></div>
<div class="sq sqt" style="left:379px;top:410px"></div>
<div class="sq sqt" style="left:462px;top:410px"></div>
<div class="sq sqt" style="left:546px;top:410px"></div>
<div class="sq sqt" style="left:630px;top:410px"></div>
<div class="sq sqt" style="left:713px;top:410px"></div>
</div>


<!-- slide -->
<div class="a" style="left:207px;top:167px;width:909px;height:512px;background:#fafafa;border:1px solid #c8c8c8"></div>
<div class="a" style="left:321px;top:197px;width:680px;height:452px;overflow:hidden;background:#8a6a6a">
<div class="a" style="left:-20px;top:-20px;width:720px;height:492px;filter:blur(5px)">
<div class="a" style="left:0px;top:0px;width:39px;height:34px;background:#1e1418"></div>
<div class="a" style="left:39px;top:0px;width:62px;height:34px;background:#3a2c32"></div>
<div class="a" style="left:101px;top:0px;width:22px;height:34px;background:#2a1a1e"></div>
<div class="a" style="left:123px;top:0px;width:62px;height:34px;background:#2a1a1e"></div>
<div class="a" style="left:185px;top:0px;width:21px;height:34px;background:#d8d8d8"></div>
<div class="a" style="left:206px;top:0px;width:62px;height:34px;background:#c8c0c0"></div>
<div class="a" style="left:268px;top:0px;width:22px;height:34px;background:#f0f0f0"></div>
<div class="a" style="left:290px;top:0px;width:62px;height:34px;background:#806068"></div>
<div class="a" style="left:352px;top:0px;width:21px;height:34px;background:#3a2a30"></div>
<div class="a" style="left:373px;top:0px;width:62px;height:34px;background:#4a3a40"></div>
<div class="a" style="left:435px;top:0px;width:22px;height:34px;background:#6a5a68"></div>
<div class="a" style="left:457px;top:0px;width:62px;height:34px;background:#6a5a64"></div>
<div class="a" style="left:519px;top:0px;width:22px;height:34px;background:#a08a8a"></div>
<div class="a" style="left:541px;top:0px;width:62px;height:34px;background:#4a3a40"></div>
<div class="a" style="left:603px;top:0px;width:21px;height:34px;background:#1e1620"></div>
<div class="a" style="left:624px;top:0px;width:62px;height:34px;background:#241c26"></div>
<div class="a" style="left:686px;top:0px;width:34px;height:34px;background:#2a2230"></div>
<div class="a" style="left:0px;top:34px;width:39px;height:57px;background:#24181c"></div>
<div class="a" style="left:39px;top:34px;width:62px;height:57px;background:#402c2c"></div>
<div class="a" style="left:101px;top:34px;width:22px;height:57px;background:#3a2424"></div>
<div class="a" style="left:123px;top:34px;width:62px;height:57px;background:#624644"></div>
<div class="a" style="left:185px;top:34px;width:21px;height:57px;background:#907070"></div>
<div class="a" style="left:206px;top:34px;width:62px;height:57px;background:#baa4a2"></div>
<div class="a" style="left:268px;top:34px;width:22px;height:57px;background:#c8a8a0"></div>
<div class="a" style="left:290px;top:34px;width:62px;height:57px;background:#7b5d5d"></div>
<div class="a" style="left:352px;top:34px;width:21px;height:57px;background:#4a3030"></div>
<div class="a" style="left:373px;top:34px;width:62px;height:57px;background:#4e3536"></div>
<div class="a" style="left:435px;top:34px;width:22px;height:57px;background:#4a3030"></div>
<div class="a" style="left:457px;top:34px;width:62px;height:57px;background:#4e3b3f"></div>
<div class="a" style="left:519px;top:34px;width:22px;height:57px;background:#3a2828"></div>
<div class="a" style="left:541px;top:34px;width:62px;height:57px;background:#3b2c30"></div>
<div class="a" style="left:603px;top:34px;width:21px;height:57px;background:#1e1418"></div>
<div class="a" style="left:624px;top:34px;width:62px;height:57px;background:#221a22"></div>
<div class="a" style="left:686px;top:34px;width:34px;height:57px;background:#2a2634"></div>
<div class="a" style="left:0px;top:91px;width:39px;height:17px;background:#2a1c20"></div>
<div class="a" style="left:39px;top:91px;width:62px;height:17px;background:#6a4840"></div>
<div class="a" style="left:101px;top:91px;width:22px;height:17px;background:#a87a70"></div>
<div class="a" style="left:123px;top:91px;width:62px;height:17px;background:#946860"></div>
<div class="a" style="left:185px;top:91px;width:21px;height:17px;background:#c0a0a0"></div>
<div class="a" style="left:206px;top:91px;width:62px;height:17px;background:#c8b8b8"></div>
<div class="a" style="left:268px;top:91px;width:22px;height:17px;background:#c8a8a0"></div>
<div class="a" style="left:290px;top:91px;width:62px;height:17px;background:#5a3c3c"></div>
<div class="a" style="left:352px;top:91px;width:21px;height:17px;background:#5a4040"></div>
<div class="a" style="left:373px;top:91px;width:62px;height:17px;background:#5a3a3a"></div>
<div class="a" style="left:435px;top:91px;width:22px;height:17px;background:#4a3030"></div>
<div class="a" style="left:457px;top:91px;width:62px;height:17px;background:#4a3a40"></div>
<div class="a" style="left:519px;top:91px;width:22px;height:17px;background:#2a1e22"></div>
<div class="a" style="left:541px;top:91px;width:62px;height:17px;background:#4a3a3e"></div>
<div class="a" style="left:603px;top:91px;width:21px;height:17px;background:#1e1418"></div>
<div class="a" style="left:624px;top:91px;width:62px;height:17px;background:#1e1418"></div>
<div class="a" style="left:686px;top:91px;width:34px;height:17px;background:#2a2634"></div>
<div class="a" style="left:0px;top:108px;width:39px;height:57px;background:#38282c"></div>
<div class="a" style="left:39px;top:108px;width:62px;height:57px;background:#7f5a55"></div>
<div class="a" style="left:101px;top:108px;width:22px;height:57px;background:#c08a80"></div>
<div class="a" style="left:123px;top:108px;width:62px;height:57px;background:#bd9a94"></div>
<div class="a" style="left:185px;top:108px;width:21px;height:57px;background:#c8c0c0"></div>
<div class="a" style="left:206px;top:108px;width:62px;height:57px;background:#d8cccc"></div>
<div class="a" style="left:268px;top:108px;width:22px;height:57px;background:#f8f8f8"></div>
<div class="a" style="left:290px;top:108px;width:62px;height:57px;background:#9f8885"></div>
<div class="a" style="left:352px;top:108px;width:21px;height:57px;background:#6a4a48"></div>
<div class="a" style="left:373px;top:108px;width:62px;height:57px;background:#95716e"></div>
<div class="a" style="left:435px;top:108px;width:22px;height:57px;background:#d8b0a8"></div>
<div class="a" style="left:457px;top:108px;width:62px;height:57px;background:#7b6262"></div>
<div class="a" style="left:519px;top:108px;width:22px;height:57px;background:#2a1e22"></div>
<div class="a" style="left:541px;top:108px;width:62px;height:57px;background:#2f2226"></div>
<div class="a" style="left:603px;top:108px;width:21px;height:57px;background:#1e1418"></div>
<div class="a" style="left:624px;top:108px;width:62px;height:57px;background:#21171c"></div>
<div class="a" style="left:686px;top:108px;width:34px;height:57px;background:#2a2028"></div>
<div class="a" style="left:0px;top:165px;width:39px;height:18px;background:#4a3436"></div>
<div class="a" style="left:39px;top:165px;width:62px;height:18px;background:#9a7068"></div>
<div class="a" style="left:101px;top:165px;width:22px;height:18px;background:#c89488"></div>
<div class="a" style="left:123px;top:165px;width:62px;height:18px;background:#d8b8b0"></div>
<div class="a" style="left:185px;top:165px;width:21px;height:18px;background:#b8a0a0"></div>
<div class="a" style="left:206px;top:165px;width:62px;height:18px;background:#d8c0c0"></div>
<div class="a" style="left:268px;top:165px;width:22px;height:18px;background:#e0c8c8"></div>
<div class="a" style="left:290px;top:165px;width:62px;height:18px;background:#c0a098"></div>
<div class="a" style="left:352px;top:165px;width:21px;height:18px;background:#8a6060"></div>
<div class="a" style="left:373px;top:165px;width:62px;height:18px;background:#b89090"></div>
<div class="a" style="left:435px;top:165px;width:22px;height:18px;background:#e0c0b8"></div>
<div class="a" style="left:457px;top:165px;width:62px;height:18px;background:#a08080"></div>
<div class="a" style="left:519px;top:165px;width:22px;height:18px;background:#2a1e22"></div>
<div class="a" style="left:541px;top:165px;width:62px;height:18px;background:#2a1e22"></div>
<div class="a" style="left:603px;top:165px;width:21px;height:18px;background:#1e1418"></div>
<div class="a" style="left:624px;top:165px;width:62px;height:18px;background:#1e1418"></div>
<div class="a" style="left:686px;top:165px;width:34px;height:18px;background:#2a2028"></div>
<div class="a" style="left:0px;top:183px;width:39px;height:57px;background:#5a3c3c"></div>
<div class="a" style="left:39px;top:183px;width:62px;height:57px;background:#9a746f"></div>
<div class="a" style="left:101px;top:183px;width:22px;height:57px;background:#d8b8b0"></div>
<div class="a" style="left:123px;top:183px;width:62px;height:57px;background:#ceaca6"></div>
<div class="a" style="left:185px;top:183px;width:21px;height:57px;background:#c0a8a8"></div>
<div class="a" style="left:206px;top:183px;width:62px;height:57px;background:#d6bebe"></div>
<div class="a" style="left:268px;top:183px;width:22px;height:57px;background:#e0c8c8"></div>
<div class="a" style="left:290px;top:183px;width:62px;height:57px;background:#c8aca8"></div>
<div class="a" style="left:352px;top:183px;width:21px;height:57px;background:#9a7068"></div>
<div class="a" style="left:373px;top:183px;width:62px;height:57px;background:#c6a29e"></div>
<div class="a" style="left:435px;top:183px;width:22px;height:57px;background:#d8b0a8"></div>
<div class="a" style="left:457px;top:183px;width:62px;height:57px;background:#967874"></div>
<div class="a" style="left:519px;top:183px;width:22px;height:57px;background:#2a1e22"></div>
<div class="a" style="left:541px;top:183px;width:62px;height:57px;background:#362428"></div>
<div class="a" style="left:603px;top:183px;width:21px;height:57px;background:#2a1e22"></div>
<div class="a" style="left:624px;top:183px;width:62px;height:57px;background:#2f2026"></div>
<div class="a" style="left:686px;top:183px;width:34px;height:57px;background:#3a2830"></div>
<div class="a" style="left:0px;top:240px;width:39px;height:17px;background:#8a5a58"></div>
<div class="a" style="left:39px;top:240px;width:62px;height:17px;background:#9a6a68"></div>
<div class="a" style="left:101px;top:240px;width:22px;height:17px;background:#d0a49c"></div>
<div class="a" style="left:123px;top:240px;width:62px;height:17px;background:#c89890"></div>
<div class="a" style="left:185px;top:240px;width:21px;height:17px;background:#c0a8a8"></div>
<div class="a" style="left:206px;top:240px;width:62px;height:17px;background:#e0c8c8"></div>
<div class="a" style="left:268px;top:240px;width:22px;height:17px;background:#e8d0d0"></div>
<div class="a" style="left:290px;top:240px;width:62px;height:17px;background:#e8d8d8"></div>
<div class="a" style="left:352px;top:240px;width:21px;height:17px;background:#f0e0e0"></div>
<div class="a" style="left:373px;top:240px;width:62px;height:17px;background:#f0d8d8"></div>
<div class="a" style="left:435px;top:240px;width:22px;height:17px;background:#d8b8b8"></div>
<div class="a" style="left:457px;top:240px;width:62px;height:17px;background:#b89088"></div>
<div class="a" style="left:519px;top:240px;width:22px;height:17px;background:#906060"></div>
<div class="a" style="left:541px;top:240px;width:62px;height:17px;background:#5a3838"></div>
<div class="a" style="left:603px;top:240px;width:21px;height:17px;background:#5a4040"></div>
<div class="a" style="left:624px;top:240px;width:62px;height:17px;background:#3a2830"></div>
<div class="a" style="left:686px;top:240px;width:34px;height:17px;background:#503840"></div>
<div class="a" style="left:0px;top:257px;width:39px;height:57px;background:#a07070"></div>
<div class="a" style="left:39px;top:257px;width:62px;height:57px;background:#a87876"></div>
<div class="a" style="left:101px;top:257px;width:22px;height:57px;background:#c89088"></div>
<div class="a" style="left:123px;top:257px;width:62px;height:57px;background:#caa29c"></div>
<div class="a" style="left:185px;top:257px;width:21px;height:57px;background:#b8a0a0"></div>
<div class="a" style="left:206px;top:257px;width:62px;height:57px;background:#d8c0c0"></div>
<div class="a" style="left:268px;top:257px;width:22px;height:57px;background:#e8d0d0"></div>
<div class="a" style="left:290px;top:257px;width:62px;height:57px;background:#d8c0c0"></div>
<div class="a" style="left:352px;top:257px;width:21px;height:57px;background:#f0e0e0"></div>
<div class="a" style="left:373px;top:257px;width:62px;height:57px;background:#dac4c4"></div>
<div class="a" style="left:435px;top:257px;width:22px;height:57px;background:#a08888"></div>
<div class="a" style="left:457px;top:257px;width:62px;height:57px;background:#b89a98"></div>
<div class="a" style="left:519px;top:257px;width:22px;height:57px;background:#d0c0c0"></div>
<div class="a" style="left:541px;top:257px;width:62px;height:57px;background:#b09094"></div>
<div class="a" style="left:603px;top:257px;width:21px;height:57px;background:#c8a0a8"></div>
<div class="a" style="left:624px;top:257px;width:62px;height:57px;background:#7c606a"></div>
<div class="a" style="left:686px;top:257px;width:34px;height:57px;background:#503840"></div>
<div class="a" style="left:0px;top:314px;width:39px;height:17px;background:#6a4850"></div>
<div class="a" style="left:39px;top:314px;width:62px;height:17px;background:#a07878"></div>
<div class="a" style="left:101px;top:314px;width:22px;height:17px;background:#d8aca4"></div>
<div class="a" style="left:123px;top:314px;width:62px;height:17px;background:#e0c0b8"></div>
<div class="a" style="left:185px;top:314px;width:21px;height:17px;background:#c0a8a8"></div>
<div class="a" style="left:206px;top:314px;width:62px;height:17px;background:#e0c8c8"></div>
<div class="a" style="left:268px;top:314px;width:22px;height:17px;background:#f8f8f8"></div>
<div class="a" style="left:290px;top:314px;width:62px;height:17px;background:#a07878"></div>
<div class="a" style="left:352px;top:314px;width:21px;height:17px;background:#f0e8e8"></div>
<div class="a" style="left:373px;top:314px;width:62px;height:17px;background:#e8d0d0"></div>
<div class="a" style="left:435px;top:314px;width:22px;height:17px;background:#e0c8c8"></div>
<div class="a" style="left:457px;top:314px;width:62px;height:17px;background:#b89090"></div>
<div class="a" style="left:519px;top:314px;width:22px;height:17px;background:#d8b8c0"></div>
<div class="a" style="left:541px;top:314px;width:62px;height:17px;background:#d0a8b0"></div>
<div class="a" style="left:603px;top:314px;width:21px;height:17px;background:#c8a0a8"></div>
<div class="a" style="left:624px;top:314px;width:62px;height:17px;background:#a08090"></div>
<div class="a" style="left:686px;top:314px;width:34px;height:17px;background:#6a6070"></div>
<div class="a" style="left:0px;top:331px;width:39px;height:57px;background:#7a5058"></div>
<div class="a" style="left:39px;top:331px;width:62px;height:57px;background:#9b7071"></div>
<div class="a" style="left:101px;top:331px;width:22px;height:57px;background:#c89a94"></div>
<div class="a" style="left:123px;top:331px;width:62px;height:57px;background:#c8a29d"></div>
<div class="a" style="left:185px;top:331px;width:21px;height:57px;background:#a89090"></div>
<div class="a" style="left:206px;top:331px;width:62px;height:57px;background:#d2b6b6"></div>
<div class="a" style="left:268px;top:331px;width:22px;height:57px;background:#e0c0c0"></div>
<div class="a" style="left:290px;top:331px;width:62px;height:57px;background:#d6bcbc"></div>
<div class="a" style="left:352px;top:331px;width:21px;height:57px;background:#f0e8e8"></div>
<div class="a" style="left:373px;top:331px;width:62px;height:57px;background:#e0caca"></div>
<div class="a" style="left:435px;top:331px;width:22px;height:57px;background:#e0c8c8"></div>
<div class="a" style="left:457px;top:331px;width:62px;height:57px;background:#c0a0a2"></div>
<div class="a" style="left:519px;top:331px;width:22px;height:57px;background:#d8b8c0"></div>
<div class="a" style="left:541px;top:331px;width:62px;height:57px;background:#cea8b2"></div>
<div class="a" style="left:603px;top:331px;width:21px;height:57px;background:#c8a0a8"></div>
<div class="a" style="left:624px;top:331px;width:62px;height:57px;background:#9c8492"></div>
<div class="a" style="left:686px;top:331px;width:34px;height:57px;background:#6a6070"></div>
<div class="a" style="left:0px;top:388px;width:39px;height:17px;background:#7a5058"></div>
<div class="a" style="left:39px;top:388px;width:62px;height:17px;background:#8a6060"></div>
<div class="a" style="left:101px;top:388px;width:22px;height:17px;background:#d0a098"></div>
<div class="a" style="left:123px;top:388px;width:62px;height:17px;background:#d0a098"></div>
<div class="a" style="left:185px;top:388px;width:21px;height:17px;background:#c0a8a8"></div>
<div class="a" style="left:206px;top:388px;width:62px;height:17px;background:#e0c0c0"></div>
<div class="a" style="left:268px;top:388px;width:22px;height:17px;background:#f0e8e8"></div>
<div class="a" style="left:290px;top:388px;width:62px;height:17px;background:#e8d0d0"></div>
<div class="a" style="left:352px;top:388px;width:21px;height:17px;background:#d0a8a8"></div>
<div class="a" style="left:373px;top:388px;width:62px;height:17px;background:#c8a8a8"></div>
<div class="a" style="left:435px;top:388px;width:22px;height:17px;background:#d0b0b0"></div>
<div class="a" style="left:457px;top:388px;width:62px;height:17px;background:#907070"></div>
<div class="a" style="left:519px;top:388px;width:22px;height:17px;background:#d8b8c0"></div>
<div class="a" style="left:541px;top:388px;width:62px;height:17px;background:#c8a0b0"></div>
<div class="a" style="left:603px;top:388px;width:21px;height:17px;background:#b09098"></div>
<div class="a" style="left:624px;top:388px;width:62px;height:17px;background:#a090a0"></div>
<div class="a" style="left:686px;top:388px;width:34px;height:17px;background:#6a6070"></div>
<div class="a" style="left:0px;top:405px;width:39px;height:57px;background:#704850"></div>
<div class="a" style="left:39px;top:405px;width:62px;height:57px;background:#8f6262"></div>
<div class="a" style="left:101px;top:405px;width:22px;height:57px;background:#c89890"></div>
<div class="a" style="left:123px;top:405px;width:62px;height:57px;background:#c29692"></div>
<div class="a" style="left:185px;top:405px;width:21px;height:57px;background:#a89090"></div>
<div class="a" style="left:206px;top:405px;width:62px;height:57px;background:#caa8a8"></div>
<div class="a" style="left:268px;top:405px;width:22px;height:57px;background:#d8b0b0"></div>
<div class="a" style="left:290px;top:405px;width:62px;height:57px;background:#c09e9e"></div>
<div class="a" style="left:352px;top:405px;width:21px;height:57px;background:#6a4a4a"></div>
<div class="a" style="left:373px;top:405px;width:62px;height:57px;background:#b49090"></div>
<div class="a" style="left:435px;top:405px;width:22px;height:57px;background:#d0b0b0"></div>
<div class="a" style="left:457px;top:405px;width:62px;height:57px;background:#be9ea2"></div>
<div class="a" style="left:519px;top:405px;width:22px;height:57px;background:#d0b0b8"></div>
<div class="a" style="left:541px;top:405px;width:62px;height:57px;background:#a094a8"></div>
<div class="a" style="left:603px;top:405px;width:21px;height:57px;background:#7080a0"></div>
<div class="a" style="left:624px;top:405px;width:62px;height:57px;background:#75768e"></div>
<div class="a" style="left:686px;top:405px;width:34px;height:57px;background:#5a5a70"></div>
<div class="a" style="left:0px;top:462px;width:39px;height:30px;background:#7a4a48"></div>
<div class="a" style="left:39px;top:462px;width:62px;height:30px;background:#7a4a48"></div>
<div class="a" style="left:101px;top:462px;width:22px;height:30px;background:#b88880"></div>
<div class="a" style="left:123px;top:462px;width:62px;height:30px;background:#c89090"></div>
<div class="a" style="left:185px;top:462px;width:21px;height:30px;background:#a08888"></div>
<div class="a" style="left:206px;top:462px;width:62px;height:30px;background:#c8a0a0"></div>
<div class="a" style="left:268px;top:462px;width:22px;height:30px;background:#d8b0b0"></div>
<div class="a" style="left:290px;top:462px;width:62px;height:30px;background:#d8b0b0"></div>
<div class="a" style="left:352px;top:462px;width:21px;height:30px;background:#d0a0a0"></div>
<div class="a" style="left:373px;top:462px;width:62px;height:30px;background:#d0a0a0"></div>
<div class="a" style="left:435px;top:462px;width:22px;height:30px;background:#d0b0b0"></div>
<div class="a" style="left:457px;top:462px;width:62px;height:30px;background:#c8a8b0"></div>
<div class="a" style="left:519px;top:462px;width:22px;height:30px;background:#c8a8b0"></div>
<div class="a" style="left:541px;top:462px;width:62px;height:30px;background:#7a8098"></div>
<div class="a" style="left:603px;top:462px;width:21px;height:30px;background:#7080a0"></div>
<div class="a" style="left:624px;top:462px;width:62px;height:30px;background:#6a7088"></div>
<div class="a" style="left:686px;top:462px;width:34px;height:30px;background:#5a5a70"></div>
</div>
<div class="a" style="left:637px;top:0;width:43px;height:23px;clip-path:polygon(0 0,100% 0,100% 100%);background:linear-gradient(208deg,#f8f8fa 40%,#dde0ee 70%,#a0a8c8 100%)"></div>

</div>
<div class="sq" style="left:336px;top:207px"></div>
<div class="sq" style="left:420px;top:207px"></div>
<div class="sq" style="left:503px;top:207px"></div>
<div class="sq" style="left:587px;top:207px"></div>
<div class="sq" style="left:670px;top:207px"></div>
<div class="sq" style="left:754px;top:207px"></div>
<div class="sq" style="left:838px;top:207px"></div>
<div class="sq" style="left:921px;top:207px"></div>
<div class="sq" style="left:336px;top:281px"></div>
<div class="sq" style="left:420px;top:281px"></div>
<div class="sq" style="left:503px;top:281px"></div>
<div class="sq" style="left:587px;top:281px"></div>
<div class="sq" style="left:670px;top:281px"></div>
<div class="sq" style="left:754px;top:281px"></div>
<div class="sq" style="left:838px;top:281px"></div>
<div class="sq" style="left:921px;top:281px"></div>
<div class="sq" style="left:336px;top:356px"></div>
<div class="sq" style="left:420px;top:356px"></div>
<div class="sq" style="left:503px;top:356px"></div>
<div class="sq" style="left:587px;top:356px"></div>
<div class="sq" style="left:670px;top:356px"></div>
<div class="sq" style="left:754px;top:356px"></div>
<div class="sq" style="left:838px;top:356px"></div>
<div class="sq" style="left:921px;top:356px"></div>
<div class="sq" style="left:336px;top:430px"></div>
<div class="sq" style="left:420px;top:430px"></div>
<div class="sq" style="left:503px;top:430px"></div>
<div class="sq" style="left:587px;top:430px"></div>
<div class="sq" style="left:670px;top:430px"></div>
<div class="sq" style="left:754px;top:430px"></div>
<div class="sq" style="left:838px;top:430px"></div>
<div class="sq" style="left:921px;top:430px"></div>
<div class="sq" style="left:336px;top:504px"></div>
<div class="sq" style="left:420px;top:504px"></div>
<div class="sq" style="left:503px;top:504px"></div>
<div class="sq" style="left:587px;top:504px"></div>
<div class="sq" style="left:670px;top:504px"></div>
<div class="sq" style="left:754px;top:504px"></div>
<div class="sq" style="left:838px;top:504px"></div>
<div class="sq" style="left:921px;top:504px"></div>
<div class="sq" style="left:336px;top:578px"></div>
<div class="sq" style="left:420px;top:578px"></div>
<div class="sq" style="left:503px;top:578px"></div>
<div class="sq" style="left:587px;top:578px"></div>
<div class="sq" style="left:670px;top:578px"></div>
<div class="sq" style="left:754px;top:578px"></div>
<div class="sq" style="left:838px;top:578px"></div>
<div class="sq" style="left:921px;top:578px"></div>
<!-- vertical scrollbar -->
<div class="a" style="left:1138px;top:157px;width:17px;height:534px;background:#e6e6e6"></div>
<div class="a" style="left:1139px;top:175px;width:15px;height:295px;background:#d9d9d9"></div>
<div class="a" style="left:1139px;top:159px;width:15px;height:15px;background:#fafafa;border:1px solid #a8a8a8"></div>
<div class="a" style="left:1143px;top:163px;width:0;height:0;border-left:3.5px solid transparent;border-right:3.5px solid transparent;border-bottom:4px solid #555"></div>
<div class="a" style="left:1139px;top:471px;width:15px;height:149px;background:#fafafa;border:1px solid #a8a8a8"></div>
<div class="a" style="left:1139px;top:620px;width:15px;height:15px;background:#fafafa;border:1px solid #a8a8a8"></div>
<div class="a" style="left:1143px;top:626px;width:0;height:0;border-left:3.5px solid transparent;border-right:3.5px solid transparent;border-top:4px solid #555"></div>
<svg style="left:1142px;top:640px" width="9" height="10" viewBox="0 0 9 10"><path d="M0.5 4.5L4.5 0.5l4 4zM0.5 9.5L4.5 5.5l4 4z" fill="#555"/><path d="M0 5h9" stroke="#555" stroke-width="0"/></svg>
<svg style="left:1142px;top:657px" width="9" height="10" viewBox="0 0 9 10"><path d="M0.5 0.5h8L4.5 4.5zM0.5 5.5h8L4.5 9.5z" fill="#555"/></svg>
<!-- notes scrollbar -->
<div class="a" style="left:1139px;top:697px;width:15px;height:13px;background:#fafafa;border:1px solid #a8a8a8"></div>
<div class="a" style="left:1143px;top:701px;width:0;height:0;border-left:3.5px solid transparent;border-right:3.5px solid transparent;border-bottom:4px solid #555"></div>
<div class="a" style="left:1139px;top:710px;width:15px;height:13px;background:#fafafa;border:1px solid #a8a8a8"></div>
<div class="a" style="left:1143px;top:715px;width:0;height:0;border-left:3.5px solid transparent;border-right:3.5px solid transparent;border-top:4px solid #555"></div>

<svg style="left:912px;top:369px" width="24" height="30" viewBox="0 0 24 30">
<g stroke="#fff" stroke-width="1.3" fill="#fff" stroke-linejoin="miter">
<path d="M11.5 0.8l3.5 4h-2.2v3.5h-2.6V4.8H8z"/>
<path d="M1.5 10.5l4-3.5v2.2h3.5v2.6H5.5v2.2z"/>
<path d="M21.5 10.5l-4-3.5v2.2h-3.5v2.6h3.5v2.2z"/>
</g>
<g fill="#000">
<path d="M11.5 1.8l2.5 3h-1.6v3.5h-1.8V4.8H9z"/>
<path d="M2.5 10.5l3-2.5v1.6h3.5v1.8H5.5v1.6z"/>
<path d="M20.5 10.5l-3-2.5v1.6h-3.5v1.8h3.5v1.6z"/>
</g>
<path d="M11.5 10.5v15.5l3.5-3.5 2.6 6 2.2-1-2.6-5.8h5z" fill="#fff" stroke="#000" stroke-width="1" stroke-linejoin="miter"/>
</svg>


<!-- notes -->
<div class="a" style="left:184px;top:691px;width:971px;height:1px;background:#c6c6c6"></div>
<div class="t" style="left:195px;top:700px;font-size:14px;color:#555;letter-spacing:0.6px">单击此处添加备注</div>

<div id="status" class="a"></div>
<div class="t st" style="left:7px;letter-spacing:0.25px">幻灯片 第 3 张，共 3 张</div>
<svg style="left:156px;top:728px" width="14" height="13" viewBox="0 0 14 13"><path d="M0.5 1.5C2.5 0.5 4.5 0.5 6.5 1.5V12C4.5 11 2.5 11 0.5 12z" fill="none" stroke="#555" stroke-width="1"/><path d="M6.5 1.5C8.5 0.5 10.5 0.5 12.5 1.5V6M6.5 12c1-0.5 2-0.7 3-0.8" fill="none" stroke="#555" stroke-width="1"/><path d="M9 8.5l1.5 1.5 3-3.5" fill="none" stroke="#555" stroke-width="1"/></svg>
<div class="t st" style="left:188px">中文(中国)</div>
<svg style="left:661px;top:729px" width="13" height="12" viewBox="0 0 13 12"><path d="M3 1h6M1 4h11M1 7h11M1 10h11" stroke="#555" stroke-width="1"/><path d="M6.5 0.5L4 3h5z" fill="#555"/></svg>
<div class="t st" style="left:678px;color:#333">备注</div>
<svg style="left:722px;top:729px" width="14" height="13" viewBox="0 0 14 13"><path d="M0.5 0.5h13v9H5l-3.5 3v-3H0.5z" fill="#555"/></svg>
<div class="t st" style="left:739px;color:#333">批注</div>
<div class="a" style="left:783px;top:725px;width:39px;height:19px;background:#c8c8c8"></div>
<svg style="left:796px;top:728px" width="15" height="13" viewBox="0 0 15 13"><rect x="0.5" y="0.5" width="14" height="12" fill="none" stroke="#555" stroke-width="1"/><rect x="2.5" y="2.5" width="3" height="8" fill="none" stroke="#555" stroke-width="1"/><rect x="7.5" y="2.5" width="5" height="6" fill="none" stroke="#555" stroke-width="1"/></svg>
<svg style="left:835px;top:728px" width="14" height="13" viewBox="0 0 14 13"><rect x="0.5" y="0.5" width="5" height="4.5" fill="none" stroke="#555" stroke-width="1"/><rect x="8.5" y="0.5" width="5" height="4.5" fill="none" stroke="#555" stroke-width="1"/><rect x="0.5" y="7.5" width="5" height="4.5" fill="none" stroke="#555" stroke-width="1"/><rect x="8.5" y="7.5" width="5" height="4.5" fill="none" stroke="#555" stroke-width="1"/></svg>
<svg style="left:874px;top:728px" width="14" height="13" viewBox="0 0 14 13"><path d="M0.5 1.5C2.5 0.5 4.5 0.5 6.5 1.5V12C4.5 11 2.5 11 0.5 12zM6.5 1.5C8.5 0.5 10.5 0.5 12.5 1.5V12C10.5 11 8.5 11 6.5 12z" fill="none" stroke="#555" stroke-width="1"/><path d="M2 4h3M2 6h3M2 8h3M8 4h3M8 6h3M8 8h3" stroke="#555" stroke-width="0.8"/></svg>
<svg style="left:914px;top:728px" width="14" height="13" viewBox="0 0 14 13"><path d="M0 0.5h14" stroke="#555" stroke-width="1"/><rect x="1.5" y="0.5" width="11" height="7" fill="none" stroke="#555" stroke-width="1"/><path d="M7 7.5v3M4 12.5l3-2 3 2" fill="none" stroke="#555" stroke-width="1"/></svg>
<div class="a" style="left:948px;top:735px;width:8px;height:1px;background:#444"></div>
<div class="a" style="left:962px;top:735px;width:98px;height:1px;background:#999"></div>
<div class="a" style="left:1012px;top:732px;width:1px;height:6px;background:#999"></div>
<div class="a" style="left:994px;top:728px;width:4px;height:12px;background:#555"></div>
<svg style="left:1065px;top:731px" width="9" height="9" viewBox="0 0 9 9"><path d="M4.5 0v9M0 4.5h9" stroke="#444" stroke-width="1"/></svg>
<div class="t st" style="left:1087px;color:#333">71%</div>
<svg style="left:1126px;top:728px" width="12" height="13" viewBox="0 0 12 13"><rect x="0.5" y="0.5" width="11" height="12" fill="none" stroke="#555" stroke-width="1"/><path d="M6 1.5v3M4.5 3L6 4.5 7.5 3M6 11.5v-3M4.5 10L6 8.5 7.5 10M1.5 6.5h3M3 5L4.5 6.5 3 8M10.5 6.5h-3M9 5L7.5 6.5 9 8" fill="none" stroke="#555" stroke-width="0.8"/></svg>

</body></html>
